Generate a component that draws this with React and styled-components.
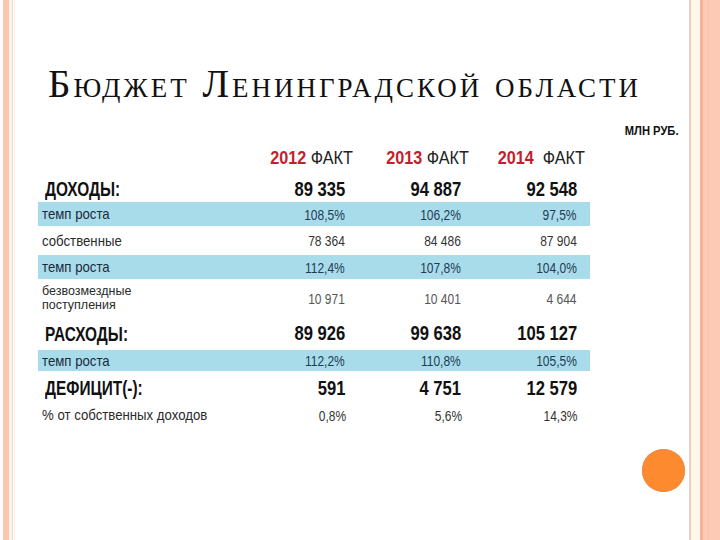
import styled, { createGlobalStyle } from 'styled-components'

const GlobalStyle = createGlobalStyle`
  html, body {
    margin: 0;
    padding: 0;
    background: #ffffff;
  }
`

const Slide = styled.div`
  width: 720px;
  height: 540px;
  display: flex;
  overflow: hidden;
  background: #ffffff;
`

const LeftEdge = styled.div`
  width: 16px;
  flex-shrink: 0;
  background: linear-gradient(
    to right,
    #ffffff 0 3px,
    #fdc6ae 3px 9px,
    #fff4ee 9px 12px,
    #f6d6c8 12px 13px,
    #ffffff 13px 14px,
    #fbf1dc 14px 15px,
    #ffffff 15px
  );
`

const RightEdge = styled.div`
  width: 32px;
  flex-shrink: 0;
  background: linear-gradient(
    to right,
    #ffffff 0 1px,
    #ead0bd 1px 3px,
    #fff7ea 3px 12px,
    #f8b297 12px 15px,
    #fdcab5 15px 20px,
    #f9c2ab 20px 21px,
    #fdcab5 21px
  );
`

const Content = styled.div`
  flex: 1;
  display: flex;
  flex-direction: column;
  padding: 64px 10px 0 22px;
  position: relative;
`

const Title = styled.h1`
  margin: 0 0 0 10px;
  font-family: "Liberation Serif", "Times New Roman", serif;
  font-weight: normal;
  font-variant: small-caps;
  font-size: 39px;
  letter-spacing: 3px;
  line-height: 40px;
  color: #111111;
  white-space: nowrap;
`

// narrow look: Arial metrics squeezed the way Arial Narrow is
const Squeeze = styled.span`
  display: inline-block;
  white-space: nowrap;
  transform: scaleX(${(p) => p.$x});
  transform-origin: ${(p) => (p.$right ? 'right' : 'left')} center;
`

const Unit = styled.div`
  margin-top: 20px;
  align-self: flex-end;
  font-family: "Liberation Sans", Arial, sans-serif;
  font-weight: bold;
  font-size: 13px;
  line-height: 14px;
  color: #111111;
`

const Table = styled.div`
  margin-top: 2px;
  width: 552px;
  display: flex;
  flex-direction: column;
  font-family: "Liberation Sans", Arial, sans-serif;
`

const Row = styled.div`
  display: grid;
  grid-template-columns: 1fr 116px 116px 116px;
  align-items: center;
  height: ${(p) => p.$h}px;
  padding: 0 ${(p) => (p.$head ? 5 : 13)}px 0 0;
  background: ${(p) => (p.$band ? '#a9dcea' : 'transparent')};
`

const Label = styled.div`
  padding-left: ${(p) => (p.$kind === 'main' ? 7 : 4)}px;
  font-size: ${(p) => (p.$kind === 'main' ? 20 : p.$kind === 'small' ? 12.5 : 15)}px;
  font-weight: ${(p) => (p.$kind === 'main' ? 'bold' : 'normal')};
  line-height: ${(p) => (p.$kind === 'small' ? 14 : 20)}px;
  color: ${(p) => (p.$kind === 'main' ? '#111111' : p.$kind === 'rate' ? '#1b2a3c' : '#2a2a2a')};
  white-space: nowrap;
`

const Value = styled.div`
  text-align: right;
  white-space: nowrap;
  font-size: ${(p) => (p.$kind === 'main' ? 20 : 15)}px;
  font-weight: ${(p) => (p.$kind === 'main' ? 'bold' : 'normal')};
  color: ${(p) =>
    p.$kind === 'main' ? '#111111' : p.$kind === 'rate' ? '#1f3b55' : p.$kind === 'light' ? '#555555' : '#333333'};
`

const HeadCell = styled.div`
  text-align: right;
  white-space: nowrap;
  font-size: 18px;
  color: #222222;
`

const Year = styled.span`
  font-weight: bold;
  color: #c21f2c;
  margin-right: ${(p) => p.$gap}px;
`

const Dot = styled.div`
  position: absolute;
  left: 626px;
  top: 449px;
  width: 43px;
  height: 43px;
  border-radius: 50%;
  background: #fd8a2e;
  box-shadow: inset 0 0 0 1px #ef8a44;
`

const headers = [
  { year: '2012', gap: 5 },
  { year: '2013', gap: 5 },
  { year: '2014', gap: 10 },
]

const labelScale = { main: 0.77, rate: 0.88, plain: 0.88, small: 1 }
const valueScale = { main: 0.83, rate: 0.8, plain: 0.8, light: 0.8 }

const rows = [
  { label: 'ДОХОДЫ:', kind: 'main', h: 26, values: ['89 335', '94 887', '92 548'] },
  { label: 'темп роста', kind: 'rate', h: 24, band: true, values: ['108,5%', '106,2%', '97,5%'] },
  { label: 'собственные', kind: 'plain', h: 29, values: ['78 364', '84 486', '87 904'] },
  { label: 'темп роста', kind: 'rate', h: 24, band: true, values: ['112,4%', '107,8%', '104,0%'] },
  {
    label: ['безвозмездные', 'поступления'],
    kind: 'small',
    valueKind: 'light',
    h: 38,
    values: ['10 971', '10 401', '4 644'],
  },
  { label: 'РАСХОДЫ:', kind: 'main', h: 33, values: ['89 926', '99 638', '105 127'] },
  { label: 'темп роста', kind: 'rate', h: 21, band: true, values: ['112,2%', '110,8%', '105,5%'] },
  { label: 'ДЕФИЦИТ(-):', kind: 'main', h: 34, values: ['591', '4 751', '12 579'] },
  { label: '% от собственных доходов', kind: 'plain', h: 18, values: ['0,8%', '5,6%', '14,3%'] },
]

export default function App() {
  return (
    <>
      <GlobalStyle />
      <Slide>
        <LeftEdge />
        <Content>
          <Title>Бюджет Ленинградской области</Title>
          <Unit>
            <Squeeze $x={0.86} $right>МЛН РУБ.</Squeeze>
          </Unit>
          <Table>
            <Row $h={36} $head>
              <div />
              {headers.map((h) => (
                <HeadCell key={h.year}>
                  <Squeeze $x={0.9} $right>
                    <Year $gap={h.gap}>{h.year}</Year>ФАКТ
                  </Squeeze>
                </HeadCell>
              ))}
            </Row>
            {rows.map((r, i) => (
              <Row key={i} $h={r.h} $band={r.band}>
                <Label $kind={r.kind}>
                  <Squeeze $x={labelScale[r.kind]}>
                    {Array.isArray(r.label) ? r.label.map((l) => <div key={l}>{l}</div>) : r.label}
                  </Squeeze>
                </Label>
                {r.values.map((v, j) => (
                  <Value key={j} $kind={r.valueKind || r.kind}>
                    <Squeeze $x={valueScale[r.valueKind || r.kind]} $right>
                      {v}
                    </Squeeze>
                  </Value>
                ))}
              </Row>
            ))}
          </Table>
          <Dot />
        </Content>
        <RightEdge />
      </Slide>
    </>
  )
}
